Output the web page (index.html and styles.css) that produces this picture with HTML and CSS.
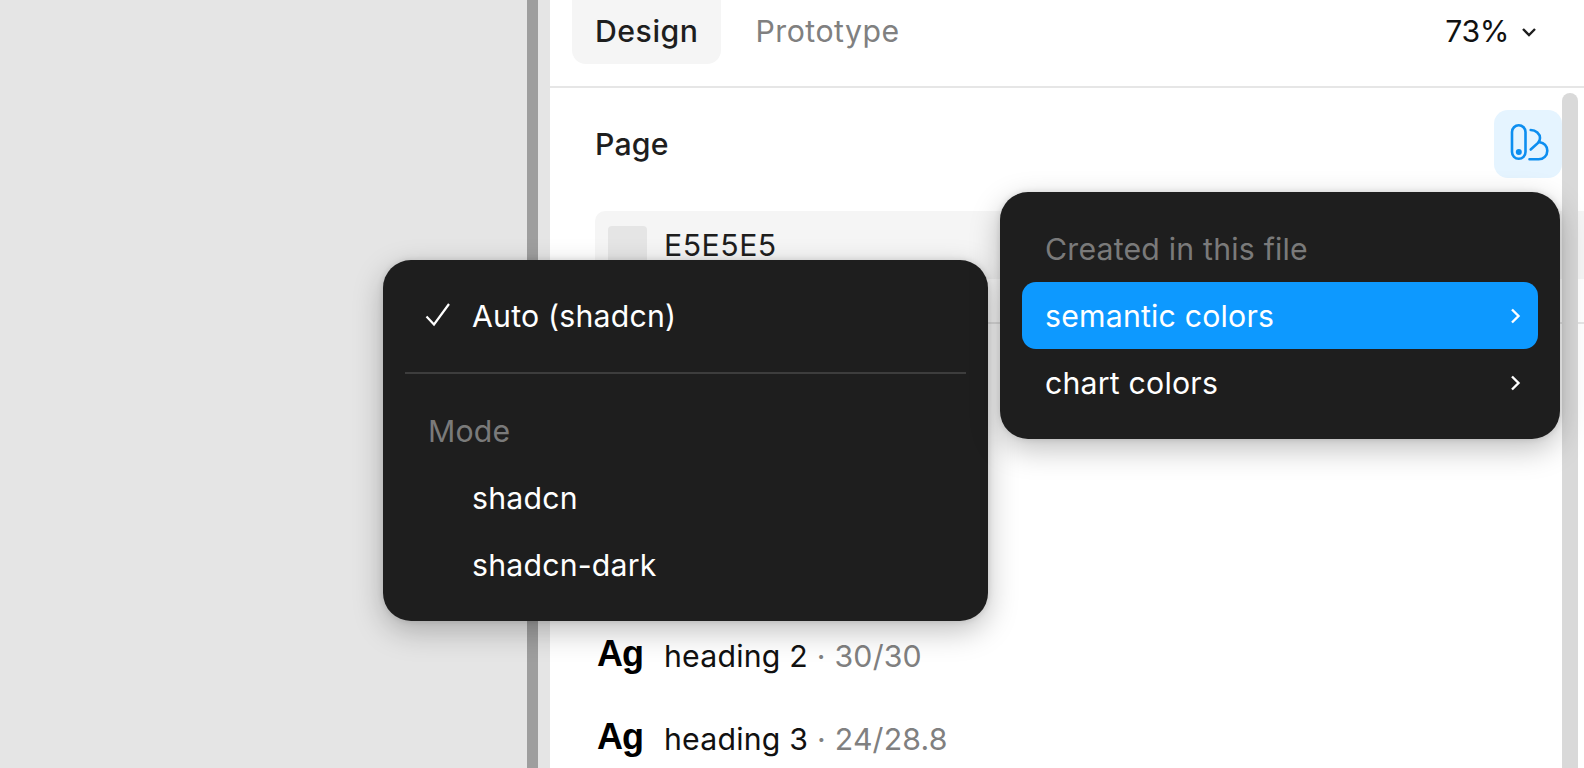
FILE: index.html
```html
<!DOCTYPE html>
<html lang="en">
<head>
    <meta charset="UTF-8">
    <meta name="viewport" content="width=device-width, initial-scale=1.0">
    <title>Design panel</title>
    <link rel="stylesheet" href="styles.css">
</head>
<body>
    <div class="canvas"></div>
    <div class="strip"></div>
    <div class="gutter"></div>
    <main class="panel">
        <header class="tabs">
            <div class="tab tab-active"><span class="tab-text">Design</span></div>
            <div class="tab"><span class="tab-text">Prototype</span></div>
            <div class="zoom-level">
                <span class="tab-text">73%</span>
                <svg class="zoom-chevron" width="16" height="12" viewBox="0 0 16 12"><path d="M2 3l6 6 6-6" fill="none" stroke="#1e1e1e" stroke-width="2.4"/></svg>
            </div>
        </header>
        <section class="page-section">
            <div class="section-head">
                <h2 class="section-title">Page</h2>
                <button class="library-btn">
                    <svg class="library-icon" width="40" height="40" viewBox="0 0 40 40" fill="none" stroke="#0d8ef0" stroke-width="2.6" stroke-linecap="round">
                        <rect x="3" y="3.3" width="13.5" height="33.5" rx="6.75"/>
                        <circle cx="9.8" cy="30" r="3" fill="#0d8ef0" stroke="none"/>
                        <path d="M21.7 8C27 8 31 12 31 16C31 18.5 30 19.5 29 21L21.7 27.5"/>
                        <path d="M30 20C35 21 38.3 24 38.3 28.7C38.3 33.5 34.5 37.3 29.7 37.3H20.5"/>
                    </svg>
                </button>
            </div>
            <div class="color-row">
                <span class="swatch"></span>
                <span class="color-value">E5E5E5</span>
            </div>
        </section>
        <section class="text-styles">
            <div class="style-row"><span class="ag">Ag</span><span>heading 2</span><span class="muted">· 30/30</span></div>
            <div class="style-row"><span class="ag">Ag</span><span>heading 3</span><span class="muted">· 24/28.8</span></div>
        </section>
    </main>
    <div class="scrollbar"></div>

    <div class="menu menu-mode">
        <div class="menu-item">
            <svg class="check" width="26" height="26" viewBox="0 0 26 26"><path d="M1.5 14.5l7.5 8L24 2" fill="none" stroke="#fff" stroke-width="2.2"/></svg>
            Auto (shadcn)
        </div>
        <div class="menu-sep"></div>
        <div class="menu-label">Mode</div>
        <div class="menu-item menu-indent">shadcn</div>
        <div class="menu-item menu-indent">shadcn-dark</div>
    </div>

    <div class="menu menu-lib">
        <div class="menu-label">Created in this file</div>
        <div class="menu-item menu-active">semantic colors
            <svg class="arrow" width="11" height="18" viewBox="0 0 11 18"><path d="M2 2.5l6.5 6.5-6.5 6.5" fill="none" stroke="#fff" stroke-width="2.4"/></svg>
        </div>
        <div class="menu-item">chart colors
            <svg class="arrow" width="11" height="18" viewBox="0 0 11 18"><path d="M2 2.5l6.5 6.5-6.5 6.5" fill="none" stroke="#fff" stroke-width="2.4"/></svg>
        </div>
    </div>
</body>
</html>
```

FILE: styles.css
```css
* {
    box-sizing: border-box;
}
body {
    margin: 0;
    height: 768px;
    display: flex;
    overflow: hidden;
    font-family: Inter, "Noto Sans", sans-serif;
    font-size: 30.25px;
    letter-spacing: 0.2px;
    color: #1e1e1e;
    background: #e5e5e5;
}
.canvas {
    width: 527px;
}
.strip {
    width: 11px;
    background: #9e9e9e;
}
.gutter {
    width: 12px;
}
.panel {
    flex: 1;
    background: #fff;
}
.tabs {
    height: 88px;
    padding: 0 47px 22px 22px;
    border-bottom: 2px solid #e6e6e6;
    display: flex;
    align-items: stretch;
    gap: 11px;
}
.tab {
    padding: 0 23px;
    display: flex;
    align-items: center;
    color: #808080;
    letter-spacing: 0.5px;
    border-radius: 0 0 14px 14px;
}
.tab-text {
    margin-top: -3px;
}
.tab-active {
    background: #f5f5f5;
    color: #1e1e1e;
    font-weight: 500;
}
.zoom-level {
    margin-left: auto;
    display: flex;
    align-items: center;
    gap: 12px;
    color: #111;
    letter-spacing: -0.4px;
}
.page-section {
    height: 236px;
    padding: 22px 0 0 45px;
    border-bottom: 2px solid #e6e6e6;
}
.section-head {
    display: flex;
    justify-content: space-between;
    align-items: center;
    height: 68px;
    margin-bottom: 33px;
}
.section-title {
    margin: 0;
    font-size: 30.25px;
    font-weight: 500;
}
.library-btn {
    width: 68px;
    height: 68px;
    margin-right: 22px;
    padding: 0;
    border: none;
    border-radius: 14px;
    background: #e5f4ff;
    display: flex;
    align-items: center;
    justify-content: center;
}
.library-icon {
    margin: 0 0 4px 2px;
}
.color-row {
    height: 68px;
    padding-left: 13px;
    border-radius: 10px 0 0 10px;
    background: #f5f5f5;
    display: flex;
    align-items: center;
    gap: 17px;
}
.color-value {
    letter-spacing: 0.5px;
}
.swatch {
    width: 39px;
    height: 39px;
    border-radius: 4px;
    background: #e5e5e5;
}
.text-styles {
    padding: 290px 0 0 47px;
}
.style-row {
    height: 83px;
    display: flex;
    align-items: center;
    gap: 9px;
    color: #111;
}
.ag {
    width: 58px;
    margin-top: -4px;
    font-family: "Liberation Sans", Arial, sans-serif;
    font-weight: 700;
    font-size: 36px;
    color: #000;
    letter-spacing: -1px;
}
.muted {
    color: #808080;
}
.scrollbar {
    position: absolute;
    left: 1562px;
    top: 93px;
    width: 16px;
    height: 700px;
    border-radius: 8px;
    background: #d9d9d9;
}
.menu {
    position: absolute;
    background: #1e1e1e;
    color: #fff;
    border-radius: 28px;
    padding: 22px;
    box-shadow: 0 10px 30px rgba(0, 0, 0, 0.25), 0 0 6px rgba(0, 0, 0, 0.12);
}
.menu-mode {
    left: 383px;
    top: 260px;
    width: 605px;
    padding-bottom: 23px;
}
.menu-lib {
    left: 1000px;
    top: 192px;
    width: 560px;
    padding-top: 23px;
    padding-bottom: 23px;
}
.menu-item {
    position: relative;
    height: 67px;
    padding-left: 23px;
    display: flex;
    align-items: center;
    justify-content: space-between;
    border-radius: 14px;
}
.menu-mode .menu-item {
    padding-left: 67px;
    justify-content: flex-start;
}
.menu-active {
    background: #0d99ff;
}
.menu-label {
    height: 67px;
    padding-left: 23px;
    display: flex;
    align-items: center;
    color: #7a7a7a;
}
.menu-sep {
    height: 2px;
    margin: 23px 0 23px;
    background: #3d3d3d;
}
.check {
    position: absolute;
    left: 20px;
    top: 20px;
}
.arrow {
    margin-right: 17px;
}
```
